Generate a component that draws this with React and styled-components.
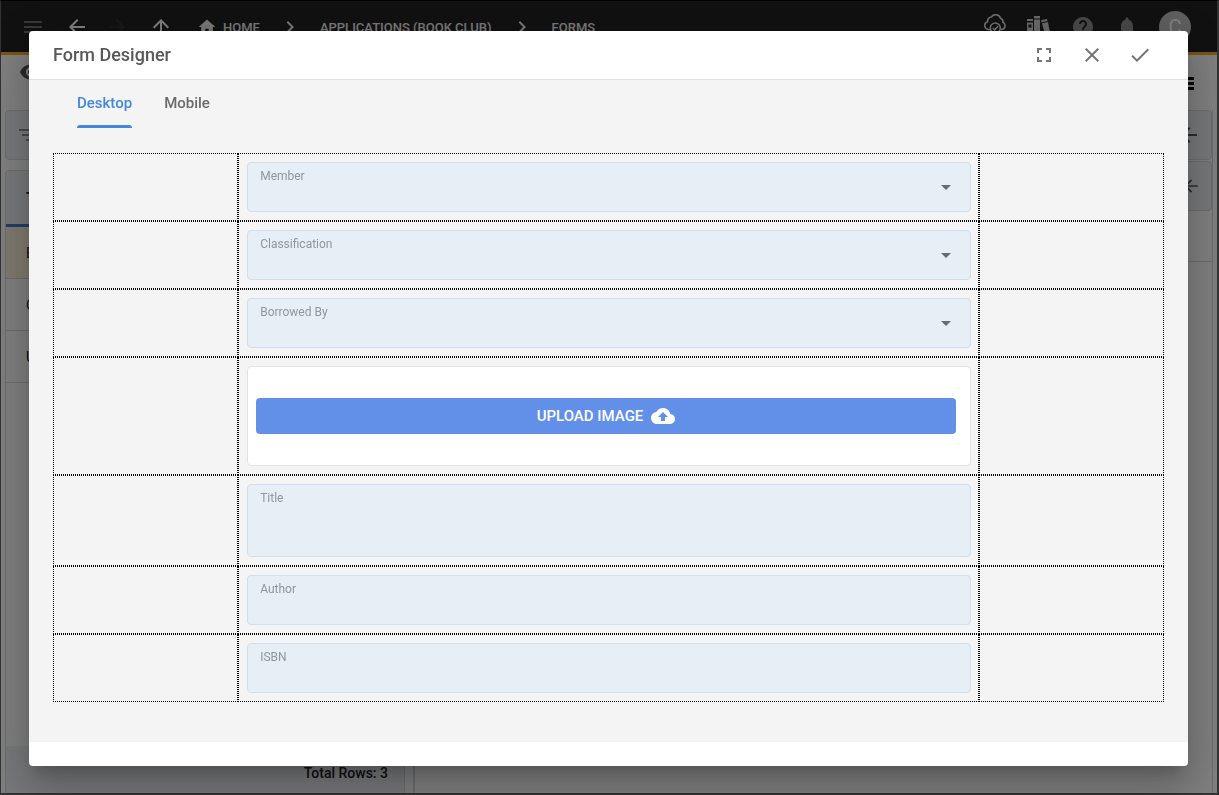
import React, { useState } from "react";
import styled, { createGlobalStyle } from "styled-components";

const Global = createGlobalStyle`
  *, *::before, *::after { box-sizing: border-box; }
  html, body { margin: 0; padding: 0; height: 100%; overflow: hidden; }
  body { font-family: Roboto, "Liberation Sans", sans-serif; font-size: 14px; color: #222; }
  button, input, select, textarea { font: inherit; margin: 0; }
`;

const colors = {
  bar: "#222222",
  accent: "#f4ab20",
  blue: "#4488dd",
  upload: "#6290e8",
  field: "#e6eef6",
  fieldBorder: "#cfdfee",
  panelHead: "#edf1f5",
  line: "#d6d8da",
};

/* ---------- application behind the dialog ---------- */

const Page = styled.div`
  height: 100vh;
  display: flex;
  flex-direction: column;
  overflow: hidden;
  background: #fff;
  border: 2px solid #666;
  border-top: 1px solid #000;
  border-left-width: 1px;
`;

const TopBar = styled.header`
  flex: none;
  height: 54px;
  display: flex;
  align-items: center;
  justify-content: space-between;
  padding: 0 26px 0 20px;
  background: ${colors.bar};
  border-bottom: 3px solid ${colors.accent};
  color: #f0f0f0;
`;

const NavGroup = styled.nav`
  display: flex;
  align-items: center;
  gap: ${(p) => p.$gap || 0}px;
`;

const Crumb = styled.a`
  display: flex;
  align-items: center;
  gap: 6px;
  color: #f0f0f0;
  font-size: 13px;
  font-weight: 500;
  line-height: 20px;
  text-decoration: none;
  text-transform: uppercase;

  span {
    padding-top: 2px;
  }
`;

const BarButton = styled.button`
  display: flex;
  padding: 0;
  border: 0;
  background: none;
  color: ${(p) => p.$color || "#fff"};
`;

const Avatar = styled.button`
  width: 32px;
  height: 32px;
  padding: 0;
  border: 0;
  border-radius: 50%;
  background: #bdbdbd;
  color: #fff;
  font-size: 20px;
  line-height: 32px;
`;

const ViewBar = styled.div`
  flex: none;
  height: 55px;
  display: flex;
  justify-content: space-between;
  align-items: flex-start;
  padding: 5px 20px 0 18px;
  color: #555;
`;

const ListButton = styled(BarButton)`
  padding-top: 11px;
`;

const Columns = styled.main`
  flex: 1;
  min-height: 0;
  display: flex;
  gap: 8px;
  padding: 0 4px;
`;

const LeftColumn = styled.section`
  width: 400px;
  flex: none;
  display: flex;
  flex-direction: column;
  gap: 10px;
`;

const RightColumn = styled.section`
  flex: 1;
  display: flex;
  flex-direction: column;
  gap: 1px;
  border-left: 2px solid ${colors.line};
  border-right: 1px solid ${colors.line};
`;

const Tools = styled.div`
  flex: none;
  height: 50px;
  display: flex;
  align-items: center;
  justify-content: ${(p) => (p.$end ? "flex-end" : "flex-start")};
  padding: 0 10px;
  background: ${colors.panelHead};
  border: 1px solid ${colors.line};
  border-radius: 4px;
  color: ${(p) => (p.$end ? "#555" : "#909090")};
`;

const ListPanel = styled.div`
  flex: 1;
  min-height: 0;
  display: flex;
  flex-direction: column;
  border: 1px solid ${colors.line};
  border-bottom: 0;
  border-radius: 4px 4px 0 0;
`;

const ListTable = styled.table`
  width: 100%;
  border-collapse: separate;
  border-spacing: 0;
  text-align: left;
  font-size: 14px;
`;

const HeadCell = styled.th`
  height: 56px;
  padding: 0 20px;
  background: ${colors.panelHead};
  border-bottom: 3px solid #3f7fcf;
`;

const BodyCell = styled.td`
  height: 52px;
  padding: 0 20px;
  background: ${(p) => (p.$selected ? "#fff5dd" : "transparent")};
  border-bottom: 1px solid ${colors.line};
`;

const Footer = styled.footer`
  height: 47px;
  flex: none;
  margin-top: auto;
  display: flex;
  align-items: center;
  justify-content: flex-end;
  padding: 6px 16px 0;
  background: ${colors.panelHead};
  font-size: 14px;
  font-weight: 500;
`;

const EmptyRow = styled.div`
  height: 50px;
  border-bottom: 1px solid ${colors.line};
`;

/* ---------- dialog ---------- */

const Overlay = styled.div`
  position: fixed;
  inset: 0;
  display: flex;
  padding: 31px 31px 29px 29px;
  background: rgba(0, 0, 0, 0.5);
`;

const Dialog = styled.section`
  flex: 1;
  min-width: 0;
  display: flex;
  flex-direction: column;
  overflow: hidden;
  background: #fff;
  border-radius: 4px;
  box-shadow: 0 11px 15px -7px rgba(0, 0, 0, 0.2), 0 24px 38px 3px rgba(0, 0, 0, 0.14),
    0 9px 46px 8px rgba(0, 0, 0, 0.12);
`;

const DialogHeader = styled.header`
  flex: none;
  display: flex;
  align-items: center;
  justify-content: space-between;
  height: 49px;
  padding: 0 24px;
  border-bottom: 1px solid #dfdfdf;
`;

const DialogTitle = styled.h1`
  margin: 0;
  font-size: 18px;
  font-weight: 500;
  line-height: 24px;
  color: #585858;
`;

const Actions = styled.div`
  display: flex;
`;

const IconButton = styled.button`
  display: flex;
  align-items: center;
  justify-content: center;
  width: 48px;
  height: 48px;
  padding: 0;
  border: 0;
  background: none;
  color: #757575;
  cursor: pointer;
`;

const DialogBody = styled.div`
  flex: 1;
  min-height: 0;
  overflow: hidden;
  padding: 0 24px;
  margin-bottom: 24px;
  background: #f4f4f4;
`;

const TabList = styled.div`
  display: flex;
  gap: 32px;
  padding: 0 24px;
  margin-bottom: 25px;
`;

const Tab = styled.button`
  display: flex;
  flex-direction: column;
  justify-content: space-between;
  height: 48px;
  padding: 12px 0 0;
  border: 0;
  background: none;
  color: ${(p) => (p.$active ? colors.blue : "#6a6a6a")};
  font-size: 15px;
  font-weight: 500;
  line-height: 22px;
  cursor: pointer;

  &::after {
    content: "";
    width: 100%;
    height: 3px;
    border-radius: 3px 3px 0 0;
    background: ${(p) => (p.$active ? colors.blue : "transparent")};
  }
`;

const DesignGrid = styled.form`
  display: grid;
  grid-template-columns: 1fr 4fr 1fr;
`;

const Cell = styled.div`
  min-width: 0;
  padding: 8px 7px 8px 8px;
  border: 1px dotted #000;
`;

const Field = styled.div`
  display: grid;
  grid-template-columns: 1fr 48px;
  grid-template-rows: 26px 1fr;
  height: ${(p) => (p.$tall ? 73 : 50)}px;
  background: ${colors.field};
  border: 1px solid ${colors.fieldBorder};
  border-radius: 4px;
`;

const FieldLabel = styled.label`
  grid-area: 1 / 1;
  z-index: 1;
  justify-self: start;
  padding: 4px 12px;
  color: #8e969e;
  font-size: 12px;
  line-height: 18px;
`;

const Control = styled.input`
  grid-area: 1 / 1 / 3 / 3;
  width: 100%;
  height: 100%;
  padding: 20px 12px 4px;
  border: 0;
  outline: 0;
  appearance: none;
  resize: none;
  background: transparent;
  color: #333;
`;

const Caret = styled.svg`
  grid-area: 1 / 2 / 3 / 3;
  place-self: center;
  pointer-events: none;
`;

const UploadBox = styled.div`
  display: flex;
  align-items: center;
  height: 100px;
  padding: 0 14px 0 8px;
  background: #fff;
  border: 1px solid #e2e2e2;
  border-radius: 4px;
`;

const UploadButton = styled.button`
  flex: 1;
  display: flex;
  align-items: center;
  justify-content: center;
  gap: 8px;
  height: 36px;
  padding: 0;
  border: 0;
  border-radius: 4px;
  background: ${colors.upload};
  color: #fff;
  font-size: 15px;
  font-weight: 500;
  cursor: pointer;
`;

/* ---------- icons ---------- */

const paths = {
  menu: "M3 18h18v-2H3v2zm0-5h18v-2H3v2zm0-7v2h18V6H3z",
  back: "M20 11H7.83l5.59-5.59L12 4l-8 8 8 8 1.41-1.41L7.83 13H20v-2z",
  forward: "M12 4l-1.41 1.41L16.17 11H4v2h12.17l-5.58 5.59L12 20l8-8z",
  up: "M4 12l1.41 1.41L11 7.83V20h2V7.83l5.58 5.59L20 12l-8-8-8 8z",
  home: "M10 20v-6h4v6h5v-8h3L12 3 2 12h3v8z",
  chevron: "M10 6L8.59 7.41 13.17 12l-4.58 4.59L10 18l6-6z",
  help: "M12 2C6.48 2 2 6.48 2 12s4.48 10 10 10 10-4.48 10-10S17.52 2 12 2zm1 17h-2v-2h2v2zm2.07-7.75l-.9.92C13.45 12.9 13 13.5 13 15h-2v-.5c0-1.1.45-2.1 1.17-2.83l1.24-1.26c.37-.36.59-.86.59-1.41 0-1.1-.9-2-2-2s-2 .9-2 2H8c0-2.21 1.79-4 4-4s4 1.79 4 4c0 .88-.36 1.68-.93 2.25z",
  bell: "M12 22c1.1 0 2-.9 2-2h-4c0 1.1.89 2 2 2zm6-6v-5c0-3.07-1.64-5.64-4.5-6.32V4c0-.83-.67-1.5-1.5-1.5s-1.5.67-1.5 1.5v.68C7.63 5.36 6 7.92 6 11v5l-2 2v1h16v-1l-2-2z",
  eye: "M12 4.5C7 4.5 2.73 7.61 1 12c1.73 4.39 6 7.5 11 7.5s9.27-3.11 11-7.5c-1.73-4.39-6-7.5-11-7.5zM12 17c-2.76 0-5-2.24-5-5s2.24-5 5-5 5 2.24 5 5-2.24 5-5 5zm0-8c-1.66 0-3 1.34-3 3s1.34 3 3 3 3-1.34 3-3-1.34-3-3-3z",
  filter: "M10 18h4v-2h-4v2zM3 6v2h18V6H3zm3 7h12v-2H6v2z",
  list: "M3 6h18v3H3zM3 11h18v3H3zM3 16h18v3H3z",
  fullscreen: "M7 14H5v5h5v-2H7v-3zm-2-4h2V7h3V5H5v5zm12 7h-3v2h5v-5h-2v3zM14 5v2h3v3h2V5h-5z",
  close: "M19 6.41L17.59 5 12 10.59 6.41 5 5 6.41 10.59 12 5 17.59 6.41 19 12 13.41 17.59 19 19 17.59 13.41 12z",
  check: "M9 16.17L4.83 12l-1.42 1.41L9 19 21 7l-1.41-1.41z",
  upload: "M19.35 10.04C18.67 6.59 15.64 4 12 4 9.11 4 6.6 5.64 5.35 8.04 2.34 8.36 0 10.91 0 14c0 3.31 2.69 6 6 6h13c2.76 0 5-2.24 5-5 0-2.64-2.05-4.78-4.65-4.96zM14 13v4h-4v-4H7l5-5 5 5h-3z",
};

const Icon = ({ name, size = 24 }) => (
  <svg width={size} height={size} viewBox="0 0 24 24" fill="currentColor" aria-hidden="true">
    <path d={paths[name]} />
  </svg>
);

const CloudCheck = () => (
  <svg width="24" height="26" viewBox="0 0 24 26" fill="none" stroke="currentColor" strokeWidth="1.6" aria-hidden="true">
    <path d="M7 15.500H5.500a4 4 0 0 1-1-7.800 4.200 4.200 0 0 1 4-4.700A5 5 0 0 1 17.500 4.300a3.700 3.700 0 0 1 2.400 3.900A3.900 3.900 0 0 1 19 15.500h-1.500" />
    <circle cx="12.300" cy="14" r="5" />
    <path d="M9.800 14l1.900 2 3.400-4" />
  </svg>
);

const Books = () => (
  <svg width="24" height="22" viewBox="0 0 24 22" fill="currentColor" aria-hidden="true">
    <path d="M0 3h6v2H0zM0 6.500h6V22H0zM7 0h6v2.500H7zM7 3.500h6V22H7zM14 4.200l6-1.200.6 2-6 1.200zM14.900 7.300l6-1.200L24 21l-5 1z" />
    <path d="M1.500 8.500h3v3h-3z" fill="#222" />
  </svg>
);

/* ---------- screen ---------- */

const SelectField = ({ id, label }) => (
  <Field>
    <FieldLabel htmlFor={id}>{label}</FieldLabel>
    <Control as="select" id={id} defaultValue="">
      <option value="" />
    </Control>
    <Caret width="10" height="5" viewBox="0 0 10 5" aria-hidden="true">
      <path d="M0 0h10L5 5z" fill="#666b70" />
    </Caret>
  </Field>
);

const TextField = ({ id, label, tall }) => (
  <Field $tall={tall}>
    <FieldLabel htmlFor={id}>{label}</FieldLabel>
    <Control as={tall ? "textarea" : "input"} id={id} />
  </Field>
);

const Upload = () => (
  <UploadBox>
    <UploadButton type="button">
      UPLOAD IMAGE
      <Icon name="upload" />
    </UploadButton>
  </UploadBox>
);

const rows = [
  <SelectField id="member" label="Member" />,
  <SelectField id="classification" label="Classification" />,
  <SelectField id="borrowed-by" label="Borrowed By" />,
  <Upload />,
  <TextField id="title" label="Title" tall />,
  <TextField id="author" label="Author" />,
  <TextField id="isbn" label="ISBN" />,
];

const Background = () => (
  <Page aria-hidden="true">
    <TopBar>
      <NavGroup $gap={24}>
        <NavGroup $gap={20}>
          <BarButton $color="#707070"><Icon name="menu" /></BarButton>
          <NavGroup $gap={16}>
            <BarButton><Icon name="back" /></BarButton>
            <BarButton $color="#303030"><Icon name="forward" /></BarButton>
          </NavGroup>
          <BarButton><Icon name="up" /></BarButton>
        </NavGroup>
        <NavGroup $gap={18}>
          <Crumb href="#home"><Icon name="home" size={20} /><span>Home</span></Crumb>
          <Icon name="chevron" />
          <Crumb href="#applications"><span>Applications (Book Club)</span></Crumb>
          <Icon name="chevron" />
          <Crumb href="#forms"><span>Forms</span></Crumb>
        </NavGroup>
      </NavGroup>
      <NavGroup $gap={20}>
        <BarButton $color="#e0e0e0"><CloudCheck /></BarButton>
        <BarButton $color="#d0d0d0"><Books /></BarButton>
        <BarButton $color="#909090"><Icon name="help" /></BarButton>
        <BarButton $color="#909090"><Icon name="bell" /></BarButton>
        <Avatar>C</Avatar>
      </NavGroup>
    </TopBar>
    <ViewBar>
      <Icon name="eye" />
      <ListButton $color="#000"><Icon name="list" /></ListButton>
    </ViewBar>
    <Columns>
      <LeftColumn>
        <Tools><Icon name="filter" /></Tools>
        <ListPanel>
          <ListTable>
            <thead><tr><HeadCell>Title</HeadCell></tr></thead>
            <tbody>
              <tr><BodyCell $selected>Book</BodyCell></tr>
              <tr><BodyCell>Classification</BodyCell></tr>
              <tr><BodyCell>User</BodyCell></tr>
            </tbody>
          </ListTable>
          <Footer>Total Rows: 3</Footer>
        </ListPanel>
      </LeftColumn>
      <RightColumn>
        <Tools $end><Icon name="back" /></Tools>
        <Tools $end><Icon name="back" size={20} /></Tools>
        <EmptyRow />
      </RightColumn>
    </Columns>
  </Page>
);

export default function App() {
  const [tab, setTab] = useState("Desktop");
  return (
    <>
      <Global />
      <Background />
      <Overlay>
        <Dialog role="dialog" aria-modal="true" aria-labelledby="dialog-title">
          <DialogHeader>
            <DialogTitle id="dialog-title">Form Designer</DialogTitle>
            <Actions>
              <IconButton aria-label="Full screen"><Icon name="fullscreen" /></IconButton>
              <IconButton aria-label="Close"><Icon name="close" /></IconButton>
              <IconButton aria-label="Save"><Icon name="check" /></IconButton>
            </Actions>
          </DialogHeader>
          <DialogBody>
            <TabList role="tablist">
              {["Desktop", "Mobile"].map((name) => (
                <Tab
                  key={name}
                  role="tab"
                  aria-selected={tab === name}
                  $active={tab === name}
                  onClick={() => setTab(name)}
                >
                  {name}
                </Tab>
              ))}
            </TabList>
            <DesignGrid>
              {rows.map((content, i) => (
                <React.Fragment key={i}>
                  <Cell />
                  <Cell>{content}</Cell>
                  <Cell />
                </React.Fragment>
              ))}
            </DesignGrid>
          </DialogBody>
        </Dialog>
      </Overlay>
    </>
  );
}
